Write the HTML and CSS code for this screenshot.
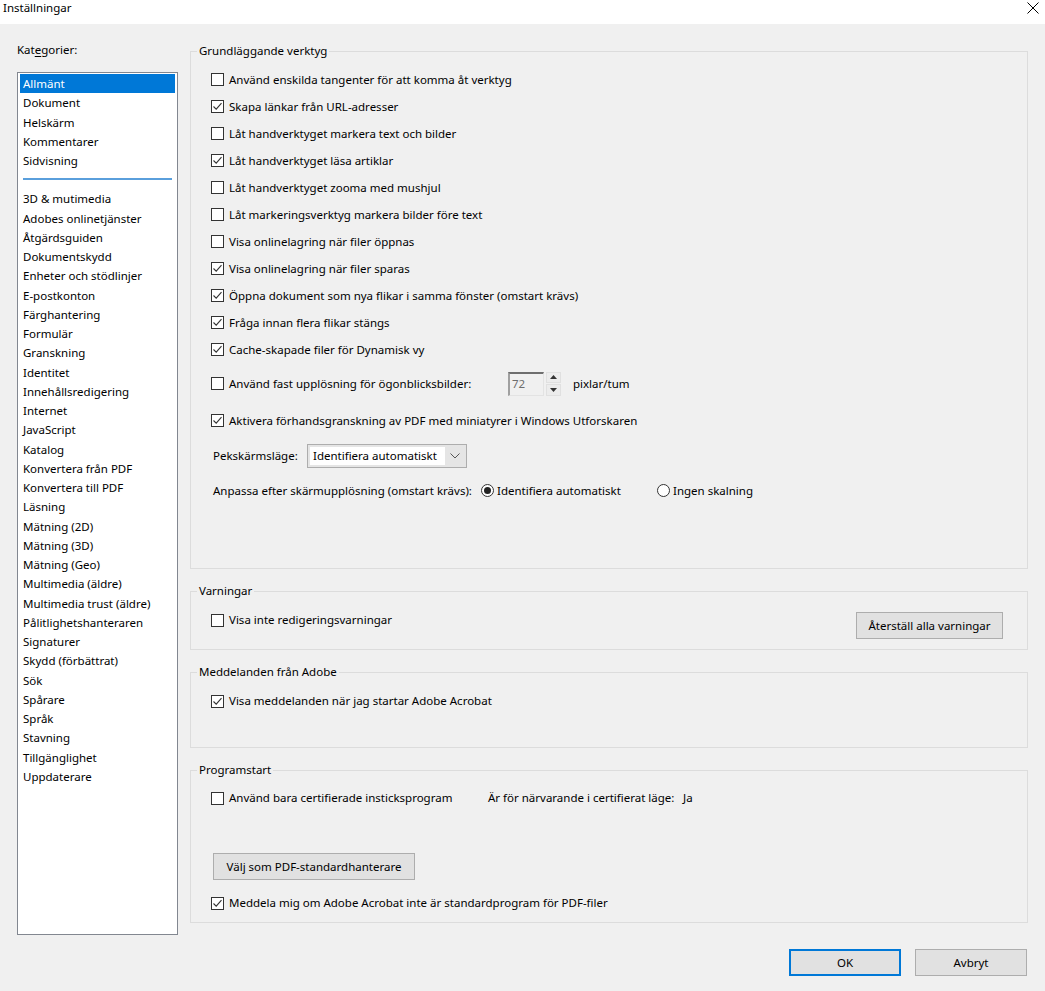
FILE: index.html
```html
<!DOCTYPE html>
<html lang="sv">
<head>
<meta charset="utf-8">
<title>Inställningar</title>
<link rel="stylesheet" href="styles.css">
</head>
<body>
<div class="window">
  <div class="titlebar">
    <span class="title">Inställningar</span>
    <svg class="close" width="12" height="12" viewBox="0 0 12 12"><path d="M0.5 0.5 L11.5 11.5 M11.5 0.5 L0.5 11.5" stroke="#000" stroke-width="1" fill="none"/></svg>
  </div>
  <div class="content">
    <div class="leftcol">
      <div class="catlabel">Kat<u>e</u>gorier:</div>
      <div class="listbox">
        <div class="item selected">Allmänt</div>
        <div class="item">Dokument</div>
        <div class="item">Helskärm</div>
        <div class="item">Kommentarer</div>
        <div class="item">Sidvisning</div>
        <div class="sep"><span></span></div>
        <div class="item">3D &amp; mutimedia</div>
        <div class="item">Adobes onlinetjänster</div>
        <div class="item">Åtgärdsguiden</div>
        <div class="item">Dokumentskydd</div>
        <div class="item">Enheter och stödlinjer</div>
        <div class="item">E-postkonton</div>
        <div class="item">Färghantering</div>
        <div class="item">Formulär</div>
        <div class="item">Granskning</div>
        <div class="item">Identitet</div>
        <div class="item">Innehållsredigering</div>
        <div class="item">Internet</div>
        <div class="item">JavaScript</div>
        <div class="item">Katalog</div>
        <div class="item">Konvertera från PDF</div>
        <div class="item">Konvertera till PDF</div>
        <div class="item">Läsning</div>
        <div class="item">Mätning (2D)</div>
        <div class="item">Mätning (3D)</div>
        <div class="item">Mätning (Geo)</div>
        <div class="item">Multimedia (äldre)</div>
        <div class="item">Multimedia trust (äldre)</div>
        <div class="item">Pålitlighetshanteraren</div>
        <div class="item">Signaturer</div>
        <div class="item">Skydd (förbättrat)</div>
        <div class="item">Sök</div>
        <div class="item">Spårare</div>
        <div class="item">Språk</div>
        <div class="item">Stavning</div>
        <div class="item">Tillgänglighet</div>
        <div class="item">Uppdaterare</div>
      </div>
    </div>
    <div class="rightcol">
      <fieldset class="group g1">
        <legend>Grundläggande verktyg</legend>
        <div class="gbody">
          <div class="row"><span class="cb"></span><span>Använd enskilda tangenter för att komma åt verktyg</span></div>
          <div class="row"><span class="cb checked"><svg viewBox="0 0 13 13"><path d="M2.5 6.5 L5.2 9.2 L10.5 3.2" stroke="#333" stroke-width="1.1" fill="none"/></svg></span><span>Skapa länkar från URL-adresser</span></div>
          <div class="row"><span class="cb"></span><span>Låt handverktyget markera text och bilder</span></div>
          <div class="row"><span class="cb checked"><svg viewBox="0 0 13 13"><path d="M2.5 6.5 L5.2 9.2 L10.5 3.2" stroke="#333" stroke-width="1.1" fill="none"/></svg></span><span>Låt handverktyget läsa artiklar</span></div>
          <div class="row"><span class="cb"></span><span>Låt handverktyget zooma med mushjul</span></div>
          <div class="row"><span class="cb"></span><span>Låt markeringsverktyg markera bilder före text</span></div>
          <div class="row"><span class="cb"></span><span>Visa onlinelagring när filer öppnas</span></div>
          <div class="row"><span class="cb checked"><svg viewBox="0 0 13 13"><path d="M2.5 6.5 L5.2 9.2 L10.5 3.2" stroke="#333" stroke-width="1.1" fill="none"/></svg></span><span>Visa onlinelagring när filer sparas</span></div>
          <div class="row"><span class="cb checked"><svg viewBox="0 0 13 13"><path d="M2.5 6.5 L5.2 9.2 L10.5 3.2" stroke="#333" stroke-width="1.1" fill="none"/></svg></span><span>Öppna dokument som nya flikar i samma fönster (omstart krävs)</span></div>
          <div class="row"><span class="cb checked"><svg viewBox="0 0 13 13"><path d="M2.5 6.5 L5.2 9.2 L10.5 3.2" stroke="#333" stroke-width="1.1" fill="none"/></svg></span><span>Fråga innan flera flikar stängs</span></div>
          <div class="row"><span class="cb checked"><svg viewBox="0 0 13 13"><path d="M2.5 6.5 L5.2 9.2 L10.5 3.2" stroke="#333" stroke-width="1.1" fill="none"/></svg></span><span>Cache-skapade filer för Dynamisk vy</span></div>
          <div class="row r-spin">
            <span class="spinlabel"><span class="cb"></span><span>Använd fast upplösning för ögonblicksbilder:</span></span>
            <span class="spin"><span class="spinval">72</span></span>
            <span class="spinbtns">
              <span class="sbtn"><svg width="7" height="4" viewBox="0 0 7 4"><path d="M3.5 0 L7 4 L0 4 Z" fill="#333"/></svg></span>
              <span class="sbtn"><svg width="7" height="4" viewBox="0 0 7 4"><path d="M0 0 L7 0 L3.5 4 Z" fill="#333"/></svg></span>
            </span>
            <span class="unit">pixlar/tum</span>
          </div>
          <div class="row r-preview"><span class="cb checked"><svg viewBox="0 0 13 13"><path d="M2.5 6.5 L5.2 9.2 L10.5 3.2" stroke="#333" stroke-width="1.1" fill="none"/></svg></span><span>Aktivera förhandsgranskning av PDF med miniatyrer i Windows Utforskaren</span></div>
          <div class="row r-touch">
            <span class="plain touchlabel">Pekskärmsläge:</span>
            <span class="combo"><span class="comboval">Identifiera automatiskt</span><svg class="chev" width="10" height="6" viewBox="0 0 10 6"><path d="M0.5 0.5 L5 5 L9.5 0.5" stroke="#555" stroke-width="1" fill="none"/></svg></span>
          </div>
          <div class="row r-scale">
            <span class="plain scalelabel">Anpassa efter skärmupplösning (omstart krävs):</span>
            <span class="radio on"></span><span class="radiotext">Identifiera automatiskt</span>
            <span class="radio"></span><span>Ingen skalning</span>
          </div>
        </div>
      </fieldset>

      <fieldset class="group g2">
        <legend>Varningar</legend>
        <div class="gbody g2body">
          <div class="line"><span class="cb"></span><span>Visa inte redigeringsvarningar</span></div>
          <button class="btn resetbtn">Återställ alla varningar</button>
        </div>
      </fieldset>

      <fieldset class="group g3">
        <legend>Meddelanden från Adobe</legend>
        <div class="gbody g3body">
          <div class="line"><span class="cb checked"><svg viewBox="0 0 13 13"><path d="M2.5 6.5 L5.2 9.2 L10.5 3.2" stroke="#333" stroke-width="1.1" fill="none"/></svg></span><span>Visa meddelanden när jag startar Adobe Acrobat</span></div>
        </div>
      </fieldset>

      <fieldset class="group g4">
        <legend>Programstart</legend>
        <div class="gbody g4body">
          <div class="line">
            <span class="certlabel"><span class="cb"></span><span>Använd bara certifierade insticksprogram</span></span>
            <span class="certmode">Är för närvarande i certifierat läge:</span>
            <span>Ja</span>
          </div>
          <button class="btn defbtn">Välj som PDF-standardhanterare</button>
          <div class="line lastline"><span class="cb checked"><svg viewBox="0 0 13 13"><path d="M2.5 6.5 L5.2 9.2 L10.5 3.2" stroke="#333" stroke-width="1.1" fill="none"/></svg></span><span>Meddela mig om Adobe Acrobat inte är standardprogram för PDF-filer</span></div>
        </div>
      </fieldset>

      <div class="buttons">
        <button class="btn dlgbtn default">OK</button>
        <button class="btn dlgbtn">Avbryt</button>
      </div>
    </div>
  </div>
</div>
</body>
</html>
```

FILE: styles.css
```css
* { box-sizing: border-box; }
html, body { margin: 0; padding: 0; }
body {
  font-family: "Noto Sans", "Open Sans", sans-serif;
  font-size: 11.5px;
  color: #000;
  background: #f0f0f0;
}
.window {
  width: 1045px;
  height: 991px;
  background: #f0f0f0;
  overflow: hidden;
}
.titlebar {
  height: 24px;
  background: #fff;
  display: flex;
  align-items: flex-start;
  justify-content: space-between;
  padding: 0 6px 0 3px;
}
.title { font-size: 11.5px; line-height: 16px; }
.close { margin-top: 2px; }

.content {
  display: flex;
  gap: 12px;
  padding: 18px 0 0 17px;
}
.leftcol { width: 161px; }
.catlabel { line-height: 16px; height: 16px; margin-bottom: 14px; }
.catlabel u { text-decoration-thickness: 1px; text-underline-offset: 2px; }
.listbox {
  height: 863px;
  background: #fff;
  border: 1px solid #828790;
  padding: 1px 1px 0 2px;
}
.item {
  height: 19.25px;
  line-height: 19px;
  padding-left: 3px;
  white-space: nowrap;
}
.item.selected { background: #0078d7; color: #fff; margin-right: 1px; }
.sep { height: 19.15px; display: flex; align-items: center; padding: 0 4px 0 3px; }
.sep span { display: block; height: 2px; width: 100%; background: #5a9fdc; margin-top: -2px; }

.rightcol { width: 838px; padding-top: 1px; }
.group {
  margin: 0 0 14px 0;
  padding: 0;
  border: 1px solid #dcdcdc;
  min-width: 0;
}
.group legend {
  margin-left: 6px;
  padding: 0 2px;
  line-height: 16px;
  height: 16px;
}
.gbody { padding: 7px 20px 61px 20px; }
.row {
  height: 27px;
  display: flex;
  align-items: center;
  white-space: nowrap;
}
.cb {
  width: 13px;
  height: 13px;
  border: 1px solid #333;
  background: #fff;
  margin-right: 5px;
  flex: none;
  position: relative;
  display: inline-block;
}
.cb svg { display: block; width: 13px; height: 13px; margin: -1px 0 0 -1px; }
.r-spin { height: 41px; }
.spinlabel { display: flex; align-items: center; width: 297px; }
.spin {
  width: 36px;
  height: 24px;
  border-top: 2px solid #6e6e6e;
  border-left: 2px solid #a0a0a0;
  border-right: 1px solid #e3e3e3;
  border-bottom: 1px solid #e3e3e3;
  background: #f0f0f0;
  color: #6d6d6d;
  padding-left: 2px;
  line-height: 20px;
  font-size: 11.5px;
}
.spinbtns {
  display: flex;
  flex-direction: column;
  gap: 1px;
  margin-left: 2px;
  width: 15px;
  height: 24px;
}
.sbtn {
  flex: 1;
  background: #ececec;
  border: 1px solid #e0e0e0;
  display: flex;
  align-items: center;
  justify-content: center;
}
.sbtn svg { display: block; }
.unit { margin-left: 12px; }
.r-preview { height: 33px; }
.r-touch { height: 37px; padding-left: 2px; }
.touchlabel { width: 94px; }
.combo {
  width: 160px;
  height: 24px;
  border: 1px solid #adadad;
  background: #e5e5e5;
  padding: 2px;
  display: flex;
  align-items: center;
}
.comboval {
  background: #fff;
  height: 18px;
  line-height: 18px;
  width: 135px;
  padding-left: 3px;
}
.chev { margin-left: 5px; }
.r-scale { height: 33px; padding-left: 2px; }
.scalelabel { width: 268px; }
.radio {
  width: 13px;
  height: 13px;
  border: 1px solid #333;
  border-radius: 50%;
  background: #fff;
  margin-right: 3px;
  flex: none;
  display: inline-flex;
  align-items: center;
  justify-content: center;
}
.radio.on::after {
  content: "";
  width: 7px;
  height: 7px;
  border-radius: 50%;
  background: #222;
}
.radiotext { width: 160px; }

.line { display: flex; align-items: center; height: 16px; line-height: 16px; white-space: nowrap; }
.g2body { display: flex; align-items: flex-start; justify-content: space-between; padding: 13px 24px 10px 20px; }
.g3body { padding: 13px 20px 38px 20px; }
.g4body { padding: 12px 20px 11px 20px; }
.certlabel { display: flex; align-items: center; width: 277px; }
.certmode { width: 195px; }
.defbtn { display: block; margin: 47px 0 15px 2px; width: 202px; }

.btn {
  font: inherit;
  color: #000;
  height: 27px;
  background: #e1e1e1;
  border: 1px solid #adadad;
  padding: 0;
  line-height: 25px;
  border-radius: 0;
}
.resetbtn { width: 147px; }
.buttons {
  display: flex;
  justify-content: flex-end;
  gap: 14px;
  padding-right: 1px;
  margin-top: 26px;
}
.dlgbtn { width: 112px; }
.dlgbtn.default { border-color: #0078d7; box-shadow: inset 0 0 0 1px #0078d7; }
```
